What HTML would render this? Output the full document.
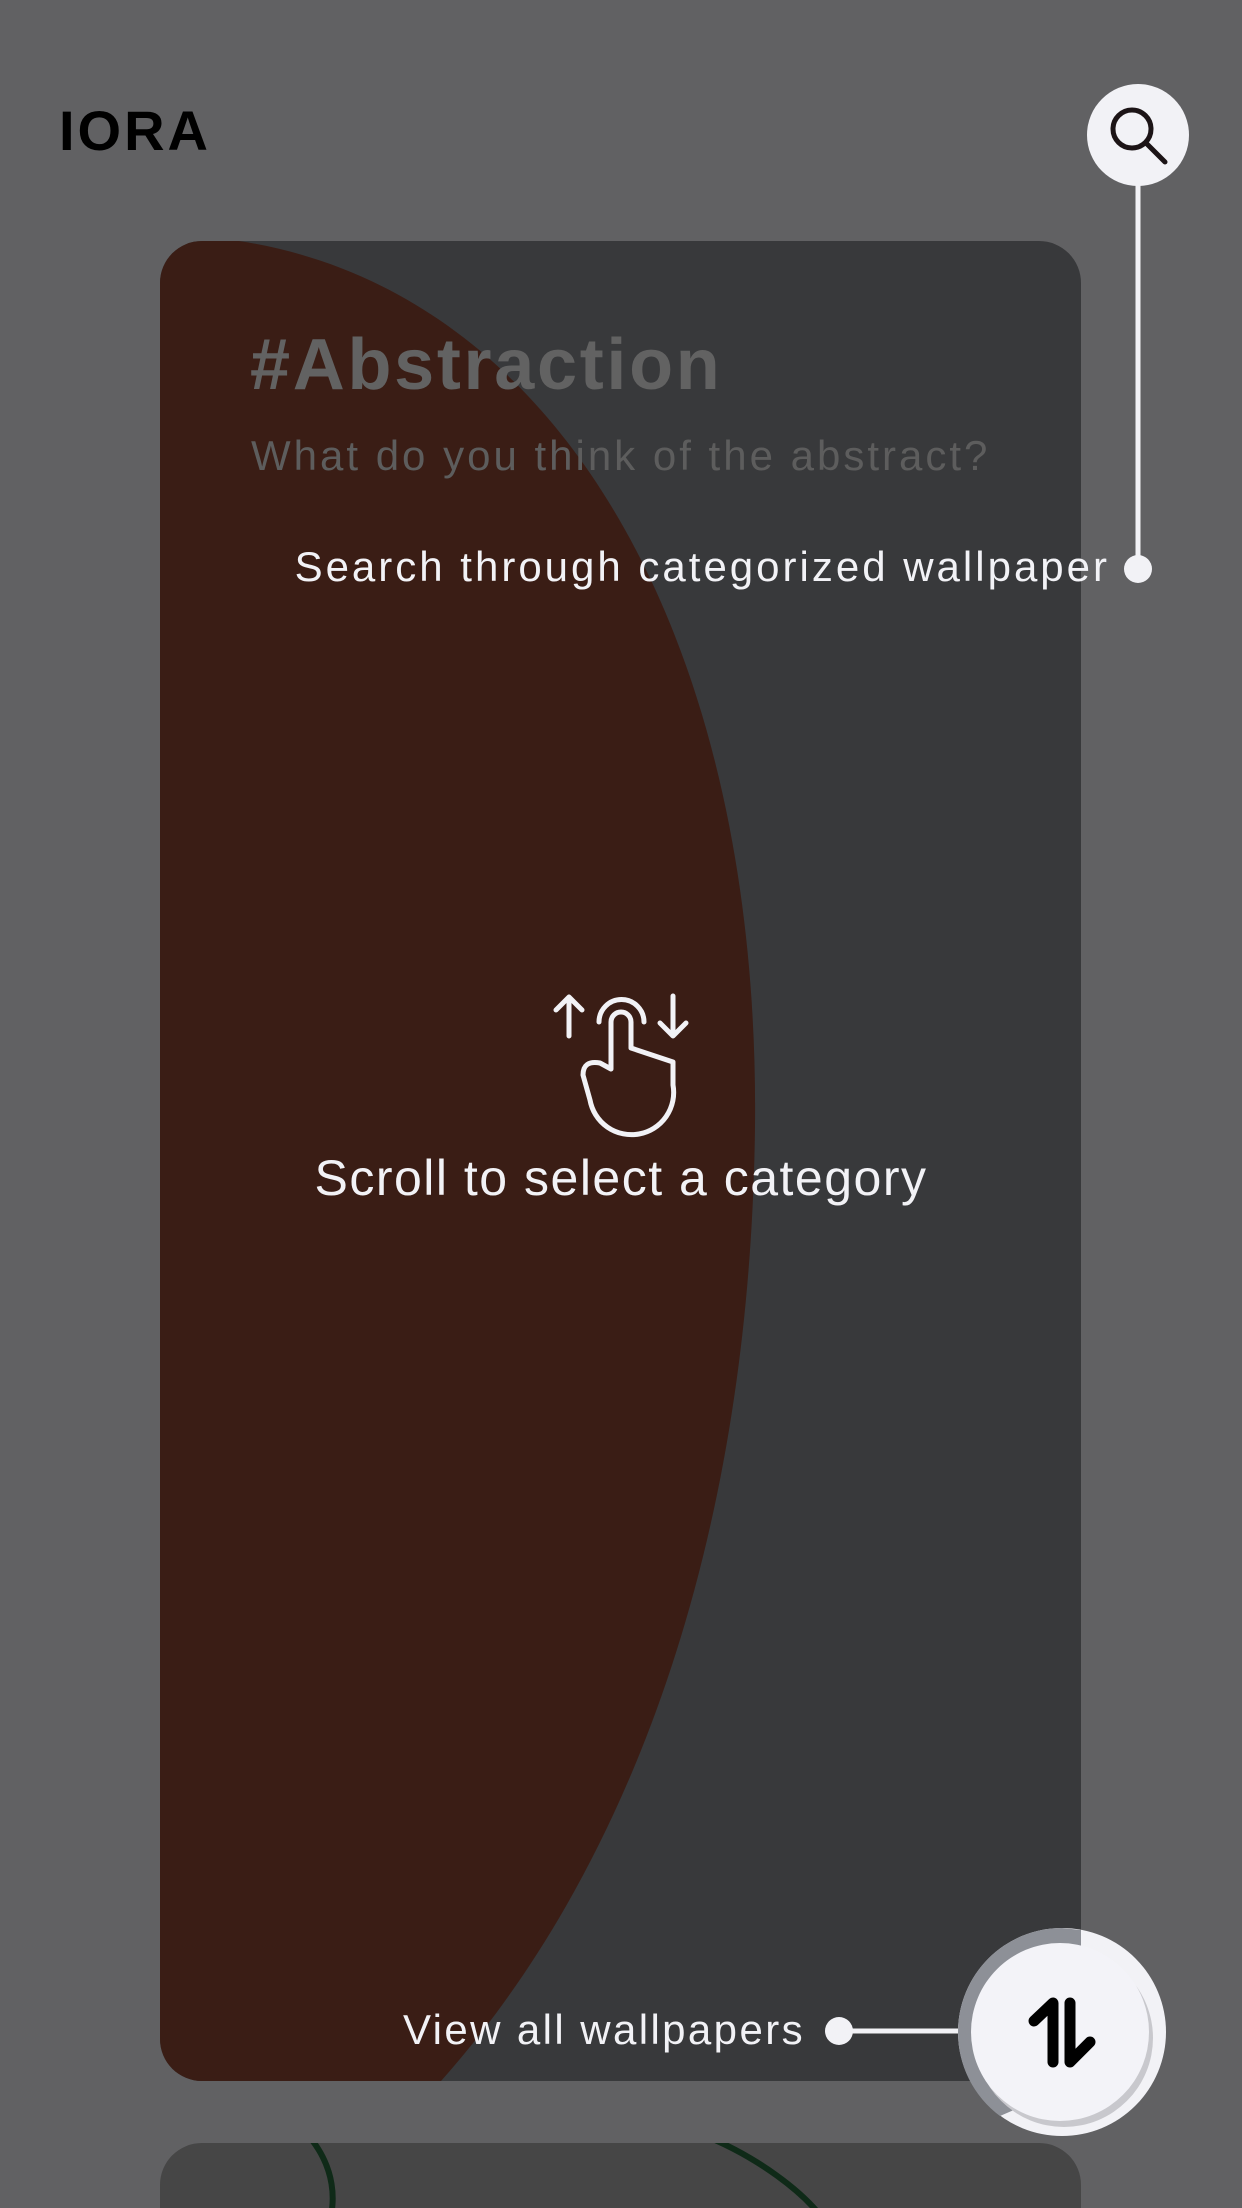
<!DOCTYPE html>
<html><head><meta charset="utf-8"><style>
html,body{margin:0;width:1242px;height:2208px;overflow:hidden}
body{background:#616163;position:relative;font-family:"Liberation Sans","Noto Sans CJK KR",sans-serif}
.a{position:absolute}
</style></head><body>
<div class="a" style="left:59px;top:98px;font-size:56px;font-weight:bold;color:#000;letter-spacing:3px">IORA</div>
<svg class="a" style="left:0;top:0;display:block" width="1242" height="2208">
<defs><clipPath id="c1"><rect x="160" y="241" width="921" height="1840" rx="42"/></clipPath>
<clipPath id="c2"><rect x="160" y="2143" width="921" height="200" rx="42"/></clipPath></defs>
<rect x="160" y="241" width="921" height="1840" rx="42" fill="#38393b"/>
<path clip-path="url(#c1)" d="M150 230 L239 241 C560 290 760 640 755 1126 C750 1560 620 1880 441 2081 L150 2090 Z" fill="#3a1d15"/>
<rect x="160" y="2143" width="921" height="200" rx="42" fill="#464646"/>
<g clip-path="url(#c2)" fill="none" stroke="#0f2a18" stroke-width="6"><path d="M312 2140 C335 2170 335 2200 330 2220"/><path d="M715 2140 C760 2160 800 2190 820 2215"/></g>
<line x1="1138" y1="180" x2="1138" y2="569" stroke="#f2f2f6" stroke-width="5"/>
<circle cx="1138" cy="569" r="14" fill="#f2f2f6"/>
<circle cx="1138" cy="135" r="51" fill="#f2f2f6"/>
<circle cx="1132" cy="129" r="19" fill="none" stroke="#1c1416" stroke-width="5"/>
<line x1="1146" y1="143" x2="1165" y2="162" stroke="#1c1416" stroke-width="5" stroke-linecap="round"/>
<g fill="none" stroke="#f2f2f6" stroke-width="5" stroke-linecap="round" stroke-linejoin="round">
<path d="M569 1036 V997 M556 1010 L569 997 L582 1010"/>
<path d="M673 996 V1036 M660 1023 L673 1036 L686 1023"/>
<path d="M599 1022 A19 19 0 0 1 644 1022"/>
<path d="M611 1069 V1022 A10 10 0 0 1 631 1022 V1048 L673 1062 V1085 A42 42 0 0 1 590 1100 L583 1075 Q583 1060 600 1063 Z"/>
</g>
<line x1="839" y1="2031" x2="990" y2="2031" stroke="#f2f2f6" stroke-width="5"/>
<circle cx="839" cy="2031" r="14" fill="#f2f2f6"/>
<circle cx="1062" cy="2032" r="104" fill="#f2f2f6"/>
<path d="M1062 1928 A104 104 0 0 0 958 2032 A104 104 0 0 0 1000 2116 L1081 2081 V1930 Z" fill="#8d9097"/>
<circle cx="1064" cy="2038" r="89" fill="#c8c8cd"/>
<circle cx="1060" cy="2032" r="89" fill="#f3f3f8"/>
<g fill="none" stroke="#000" stroke-width="11" stroke-linecap="round" stroke-linejoin="round"><path d="M1034 2021 L1053 2003 V2062"/><path d="M1070 2003 V2062 L1090 2042"/></g>
</svg>
<div class="a" style="left:250px;top:324px;font-size:72px;font-weight:bold;color:#626262;letter-spacing:2.7px">#Abstraction</div>
<div class="a" style="left:251px;top:432px;font-size:42px;color:#5d5d5d;letter-spacing:3px">What do you think of the abstract?</div>
<div class="a" style="right:132px;top:543px;font-size:42px;color:#f2f2f6;white-space:nowrap;letter-spacing:3px">Search through categorized wallpaper</div>
<div class="a" style="left:0;width:1242px;text-align:center;top:1149px;font-size:50px;color:#f2f2f6;letter-spacing:1.5px">Scroll to select a category</div>
<div class="a" style="right:437px;top:2006px;font-size:42px;color:#f2f2f6;white-space:nowrap;letter-spacing:2.4px">View all wallpapers</div>
</body></html>
